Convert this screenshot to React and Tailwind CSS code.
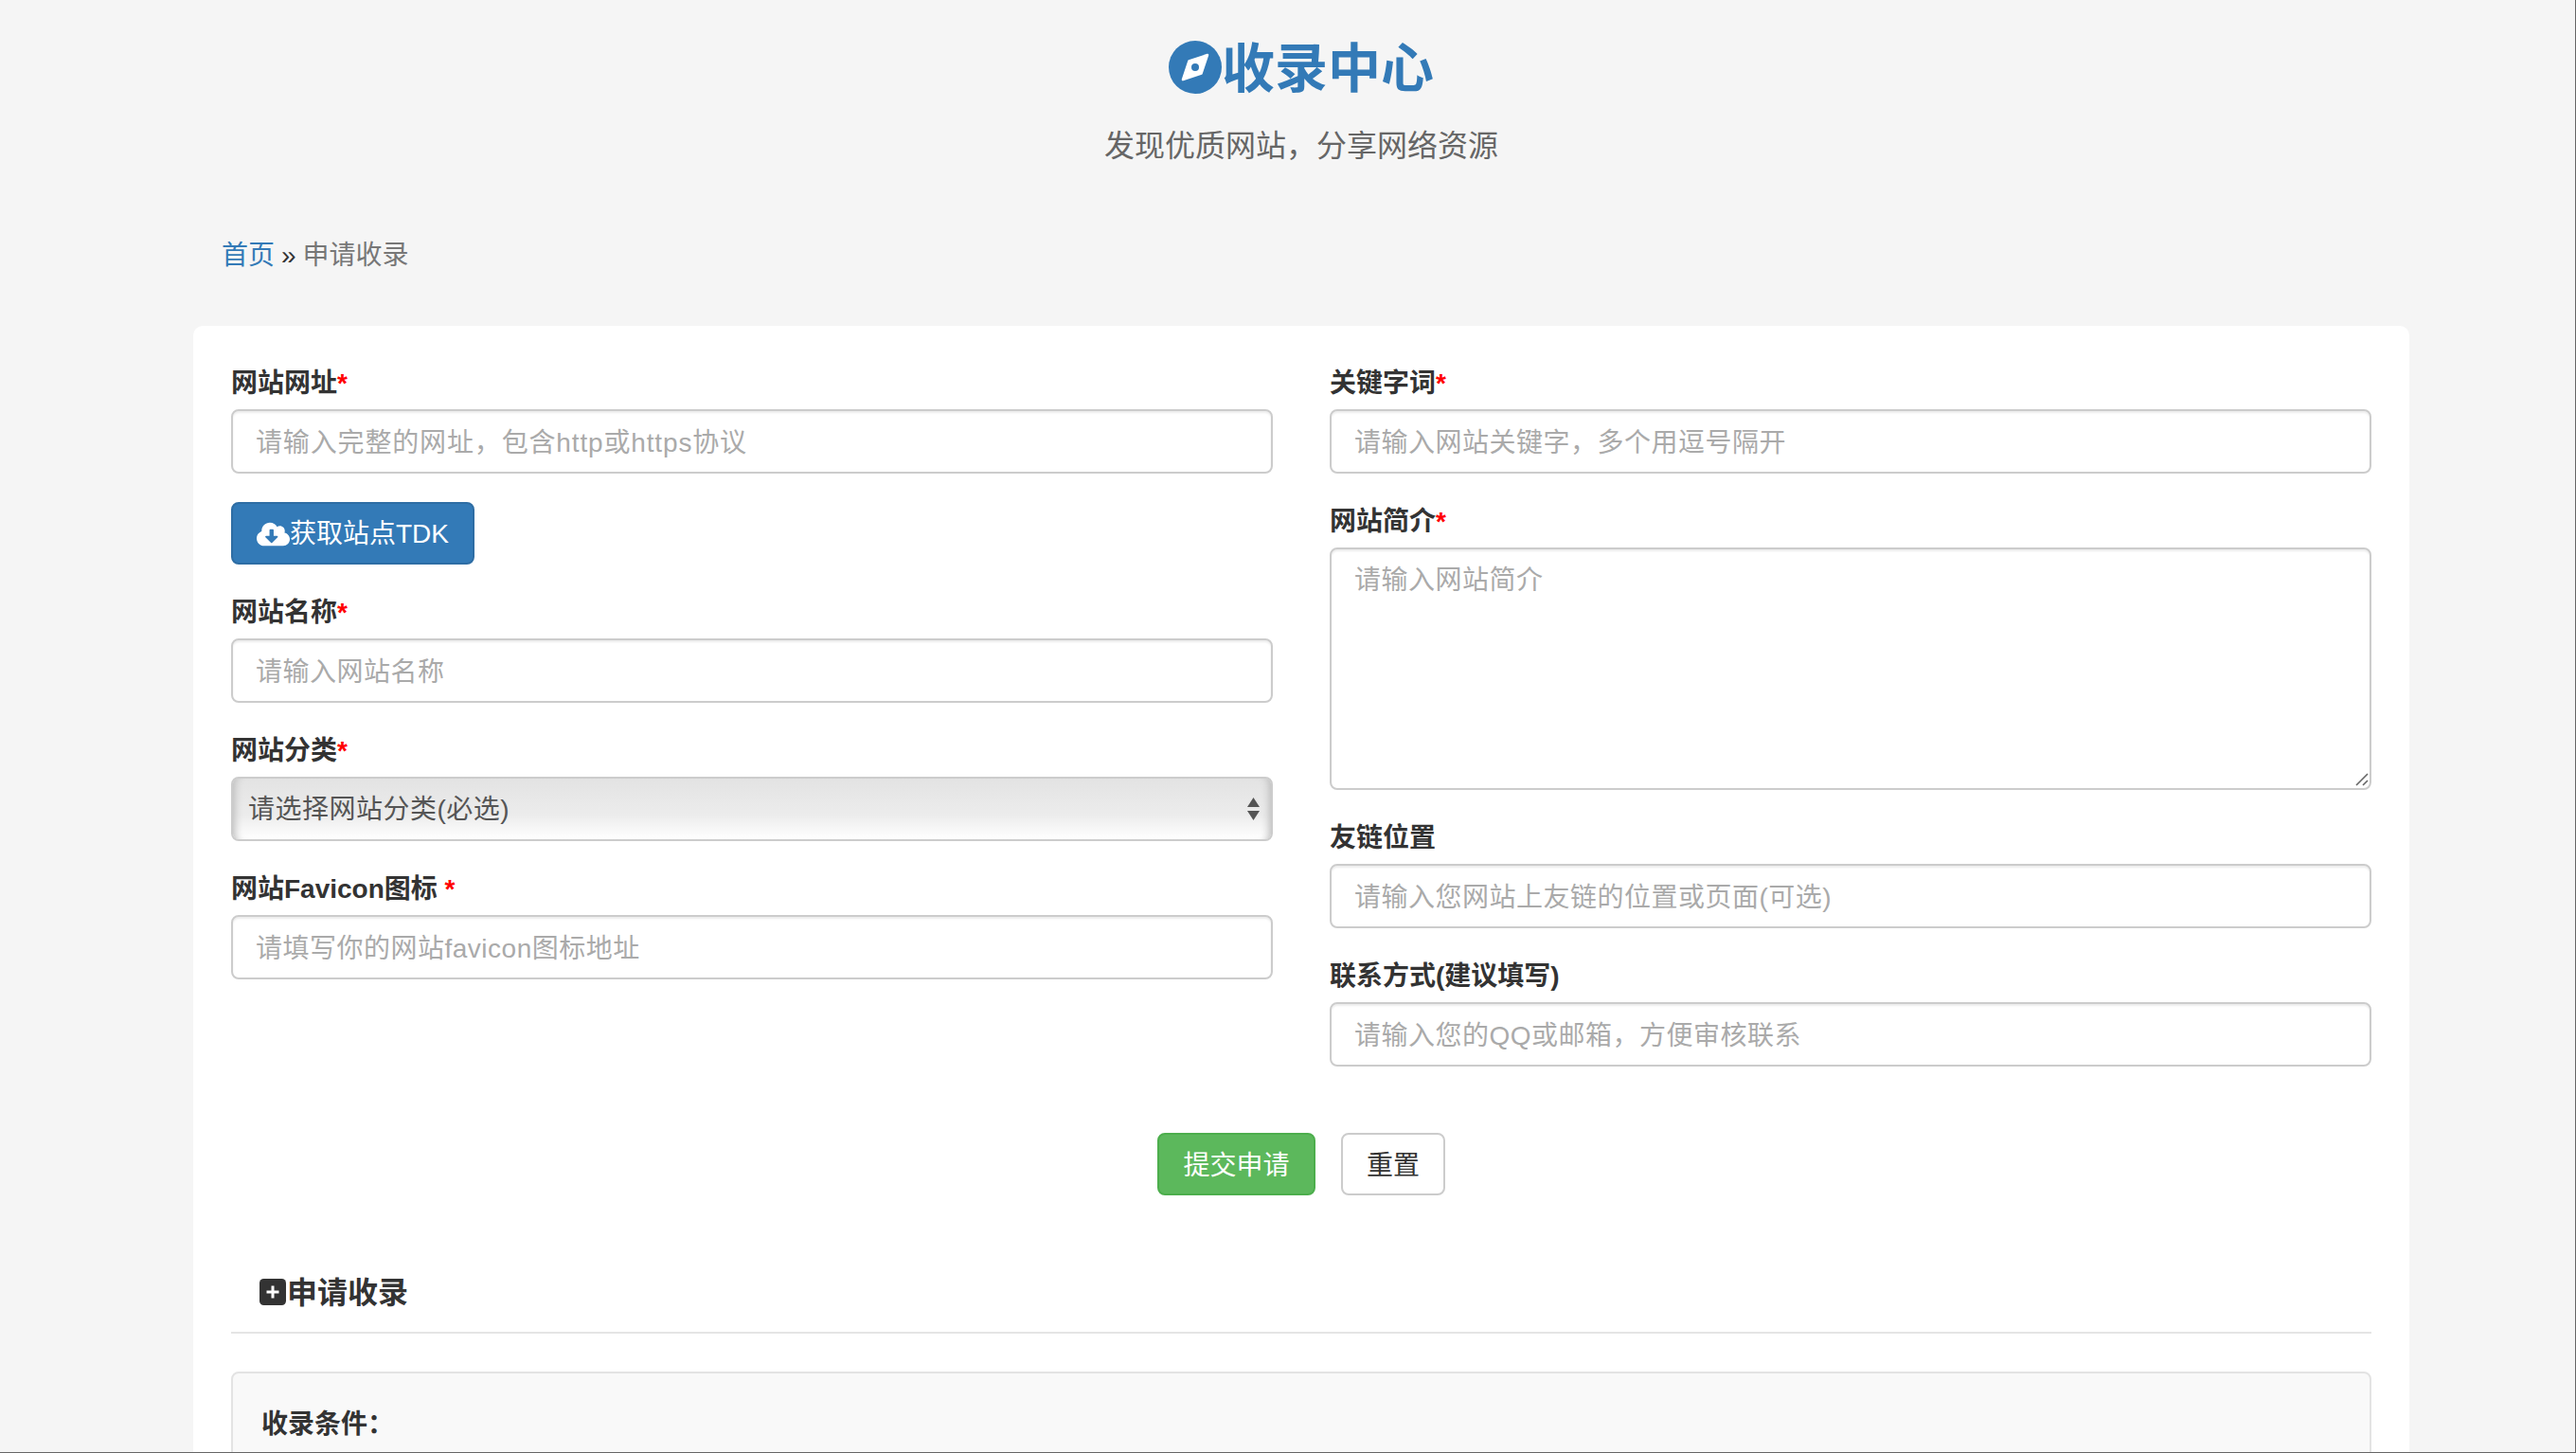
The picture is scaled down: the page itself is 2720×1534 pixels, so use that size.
import React from "react";
import { FaCloudDownloadAlt } from "react-icons/fa";

const inputCls = "block w-full h-[68px] rounded-[8px] border-2 border-[#ccc] bg-white px-[24px] pt-[3px] text-[28px] tracking-[0.5px] text-[#555] placeholder:text-[#aaa] shadow-[inset_0_2px_2px_rgba(0,0,0,0.075)] outline-none";
const inputWide = "block w-full h-[68px] rounded-[8px] border-2 border-[#ccc] bg-white px-[24px] pt-[3px] text-[28px] tracking-[0.85px] text-[#555] placeholder:text-[#aaa] shadow-[inset_0_2px_2px_rgba(0,0,0,0.075)] outline-none";

function Label({ children, star, spaced }) {
  return (
    <label className="block h-[40px] leading-[46px] mb-[10px] text-[28px] font-bold text-[#333]">
      {children}
      {star && <span className="text-[#f00]">{spaced ? " *" : "*"}</span>}
    </label>
  );
}

function Field({ label, star, spaced, placeholder, wide }) {
  return (
    <div className="mb-[28px]">
      <Label star={star} spaced={spaced}>{label}</Label>
      <input className={wide ? inputWide : inputCls} placeholder={placeholder} readOnly />
    </div>
  );
}

function Compass() {
  return (
    <svg viewBox="0 0 56 56" className="w-[56px] h-[56px] shrink-0">
      <circle cx="28" cy="28" r="28" fill="#337ab7" />
      <polygon points="41,15 34.5,34.5 15,41 21.5,21.5" fill="#fff" stroke="#fff" strokeWidth="2.5" strokeLinejoin="round" />
      <circle cx="28" cy="28" r="4" fill="#337ab7" />
    </svg>
  );
}

function PlusBox() {
  return (
    <svg viewBox="0 0 28 28" className="w-[28px] h-[28px] shrink-0 mr-[1px]">
      <rect width="28" height="28" rx="4.5" fill="#333" />
      <path d="M14 7.5 V20.5 M7.5 14 H20.5" stroke="#fff" strokeWidth="3" />
    </svg>
  );
}

export default function App() {
  return (
    <div className="relative w-[2720px] h-[1534px] overflow-hidden bg-[#f5f5f5] border-r-[1px] border-b-[1px] border-[#666] pl-[204px] text-[#333] font-['Liberation_Sans','Noto_Sans_CJK_SC',sans-serif]">
      <div className="w-[2340px]">
        <header className="pt-[40px] text-center">
          <h1 className="flex items-center justify-center h-[62px] text-[56px] leading-[62px] font-bold text-[#337ab7]">
            <Compass />
            <span className="mt-[3px]">收录中心</span>
          </h1>
          <p className="mt-[27px] h-[46px] text-[32px] leading-[50px] text-[#666]">发现优质网站，分享网络资源</p>
        </header>

        <nav className="mt-[73px] h-[40px] pl-[30px] text-[28px] leading-[44px] text-[#777]">
          <a className="text-[#337ab7]">首页</a>
          <span className="text-[#333] ml-[7px] mr-[7px]">»</span>
          <span>申请收录</span>
        </nav>

        <main className="mt-[56px] rounded-[10px] bg-white px-[40px] pt-[38px] pb-[40px]">
          <div className="grid grid-cols-2 gap-x-[60px]">
            <div>
              <Field label="网站网址" star wide placeholder="请输入完整的网址，包含http或https协议" />
              <button className="flex items-center h-[66px] w-[257px] mt-[30px] mb-[28px] rounded-[8px] border-2 border-[#2e6da4] bg-[#337ab7] pl-[25px] pt-[2px] text-[28px] text-white">
                <FaCloudDownloadAlt className="w-[35px] h-[28px] shrink-0" />
                <span>获取站点TDK</span>
              </button>
              <Field label="网站名称" star placeholder="请输入网站名称" />
              <div className="mb-[28px]">
                <Label star>网站分类</Label>
                <div className="relative">
                  <select className="block w-full h-[68px] appearance-none rounded-[8px] border-2 border-[#ccc] bg-gradient-to-b from-[#e3e3e3] via-[#ececec] via-60% to-white pl-[16px] pt-[2px] text-[28px] tracking-[0.5px] text-[#555] shadow-[inset_10px_0_8px_-8px_#bbb,inset_-10px_0_8px_-8px_#bbb] outline-none">
                    <option>请选择网站分类(必选)</option>
                  </select>
                  <svg viewBox="0 0 13 24" className="absolute right-[14px] top-[22px] w-[13px] h-[24px] pointer-events-none">
                    <polygon points="6.5,0 13,10 0,10" fill="#555" />
                    <polygon points="0,14 13,14 6.5,24" fill="#555" />
                  </svg>
                </div>
              </div>
              <Field label="网站Favicon图标" star spaced placeholder="请填写你的网站favicon图标地址" />
            </div>

            <div>
              <Field label="关键字词" star placeholder="请输入网站关键字，多个用逗号隔开" />
              <div className="mb-[28px]">
                <Label star>网站简介</Label>
                <div className="relative">
                  <textarea className="block w-full h-[256px] resize-none rounded-[8px] border-2 border-[#ccc] bg-white px-[24px] py-[13px] text-[28px] leading-[40px] tracking-[0.5px] text-[#555] placeholder:text-[#aaa] shadow-[inset_0_2px_2px_rgba(0,0,0,0.075)] outline-none" placeholder="请输入网站简介" readOnly />
                  <svg viewBox="0 0 14 14" className="absolute right-[3px] bottom-[4px] w-[14px] h-[14px] pointer-events-none">
                    <path d="M1 13 L13 1 M8 13 L13 8" stroke="#666" strokeWidth="1.6" fill="none" />
                  </svg>
                </div>
              </div>
              <Field label="友链位置" placeholder="请输入您网站上友链的位置或页面(可选)" />
              <Field label="联系方式(建议填写)" placeholder="请输入您的QQ或邮箱，方便审核联系" />
            </div>
          </div>

          <div className="mt-[42px] flex justify-center gap-[27px]">
            <button className="h-[66px] w-[167px] rounded-[8px] border-2 border-[#4cae4c] bg-[#5cb85c] pt-[3px] text-[28px] text-white">提交申请</button>
            <button className="h-[66px] w-[110px] rounded-[8px] border-2 border-[#ccc] bg-white pt-[3px] text-[28px] text-[#333]">重置</button>
          </div>

          <h2 className="mt-[79px] flex items-center h-[46px] pl-[30px] text-[32px] leading-[46px] font-bold text-[#333]">
            <PlusBox />
            <span className="mt-[2px]">申请收录</span>
          </h2>
          <div className="mt-[19px] h-[2px] bg-[#e5e5e5]" />
          <section className="mt-[40px] h-[300px] rounded-[8px] border-2 border-[#e3e3e3] bg-[#f9f9f9] px-[30px] pt-[31px]">
            <p className="text-[28px] leading-[46px] font-bold text-[#333]">收录条件：</p>
          </section>
        </main>
      </div>
    </div>
  );
}
